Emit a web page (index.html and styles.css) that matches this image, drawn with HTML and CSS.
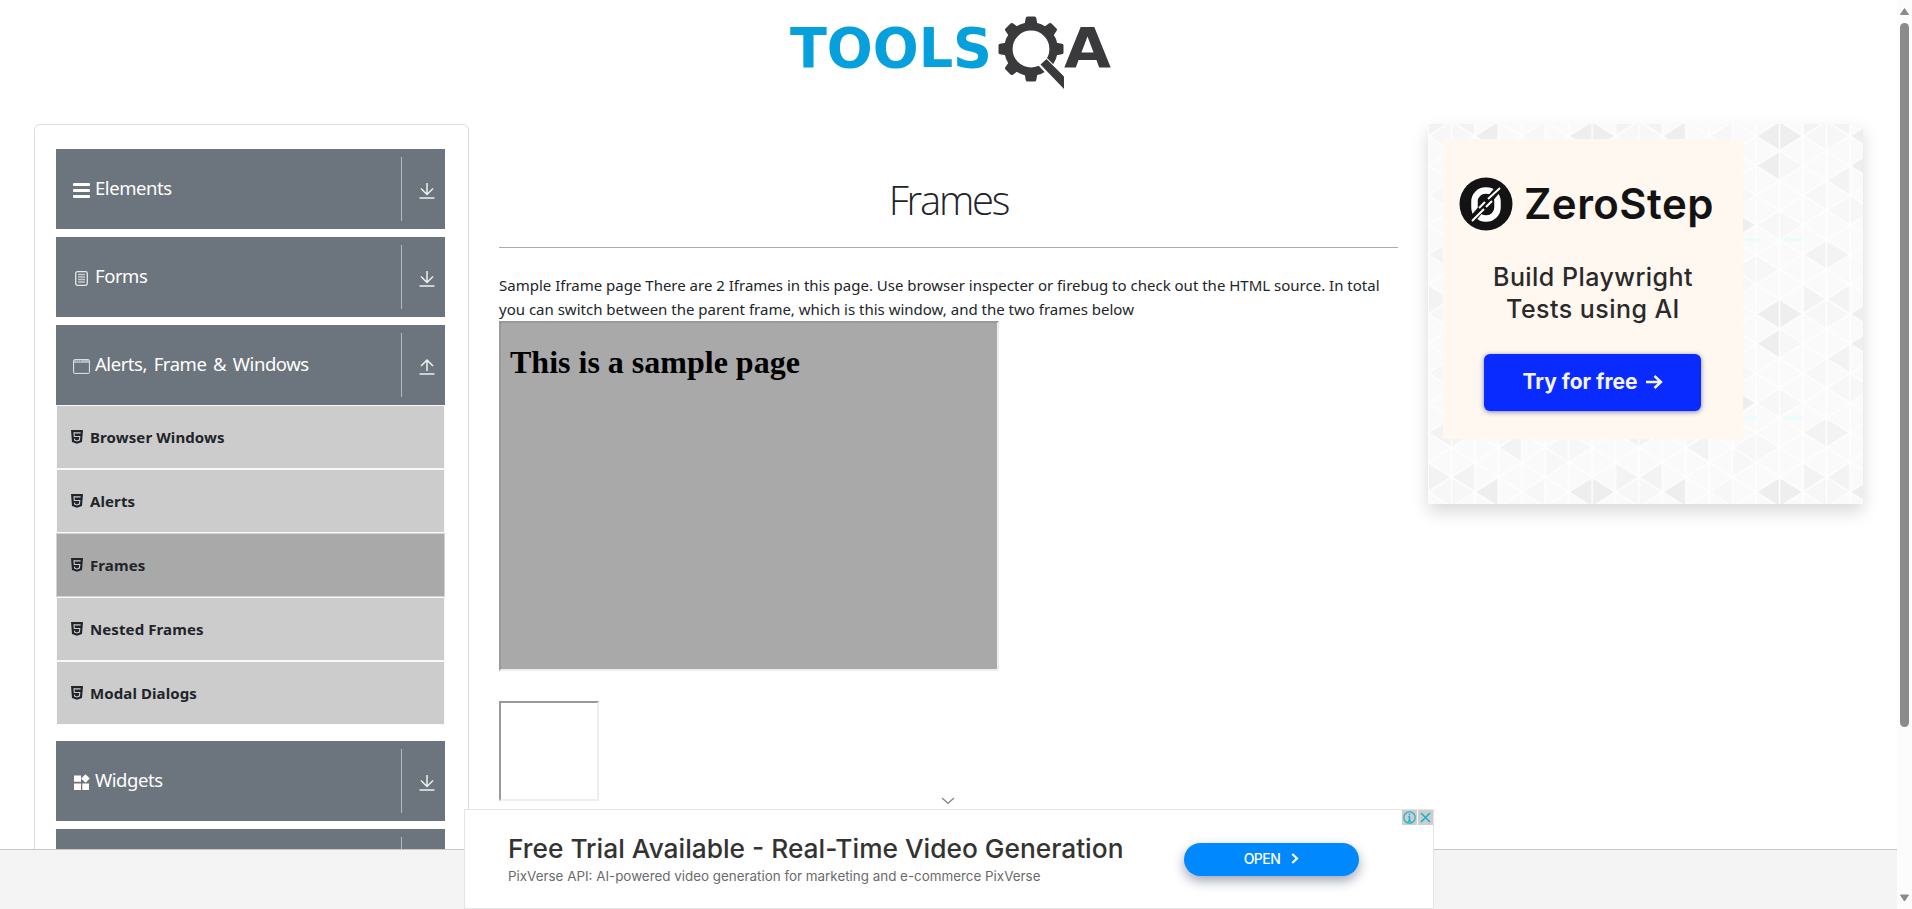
FILE: index.html
```html
<!DOCTYPE html>
<html lang="en">
<head>
<meta charset="utf-8">
<title>Frames</title>
<link rel="stylesheet" href="styles.css">
</head>
<body>
<svg width="0" height="0" class="defs">
  <symbol id="down" viewBox="0 0 16 18"><path d="M8 1v11M2 6.500l6 6 6-6" /><path d="M.5 16h15" /></symbol>
  <symbol id="up" viewBox="0 0 16 18"><path d="M8 13V2M2 8l6-6 6 6" /><path d="M.5 16h15" /></symbol>
  <symbol id="html5" viewBox="0 0 12 14"><path d="M0 0h12l-1 12-5 1.700L1 12z" fill="#212529"/><path d="M9.600 2.900H3l.3 3.600h5.500l-.4 3.600L6 11l-2.400-.8-.1-1.600" fill="none" stroke="#ccc" stroke-width="1.100"/></symbol>
</svg>
<div class="page">
  <header class="header">
    <svg class="logo" width="324" height="80" viewBox="0 0 324 80">
      <text class="logo-tools" x="0" y="57" textLength="202" lengthAdjust="spacingAndGlyphs">TOOLS</text>
      <g transform="translate(241 39)">
        <g fill="#3a3a3c">
          <g><path id="tooth" d="M-6.500-24l1.200-7Q-5-32.500-3.500-32.500h7Q5-32.500 5.300-31l1.200 7z"/><use href="#tooth" transform="rotate(45)"/><use href="#tooth" transform="rotate(90)"/><use href="#tooth" transform="rotate(180)"/></g>
          <use href="#tooth" transform="rotate(225)"/><use href="#tooth" transform="rotate(270)"/><use href="#tooth" transform="rotate(315)"/>
        </g>
        <circle r="22.600" fill="none" stroke="#3a3a3c" stroke-width="8.400"/>
        <path d="M7 16l8-8 22 22v18z" fill="#fff"/>
        <path d="M9.500 15.500l6-5.500L33 27.500V40z" fill="#3a3a3c"/>
      </g>
      <text class="logo-a" x="274" y="57" textLength="47" lengthAdjust="spacingAndGlyphs">A</text>
    </svg>
  </header>
  <main class="main">
    <aside class="side">
      <div class="group"><svg class="gi" viewBox="0 0 17 17"><path d="M1 2.500h15M1 8.500h15M1 14.500h15" stroke="#fff" stroke-width="2.800" stroke-linecap="round"/></svg><span class="gt">Elements</span><span class="tog"><svg><use href="#down"/></svg></span></div>
      <div class="group"><svg class="gi" viewBox="0 0 17 17" fill="none" stroke="#e6e8ea"><rect x="2.700" y="1.700" width="11.600" height="13.600" rx="1.800" stroke-width="1.300"/><path d="M5 4.500h7M5 7h7M5 9.500h7M5 12h7" stroke-width="1.400" stroke="#c4c8cc"/></svg><span class="gt">Forms</span><span class="tog"><svg><use href="#down"/></svg></span></div>
      <div class="group open"><svg class="gi" viewBox="0 0 17 17" fill="none" stroke="#e6e8ea"><rect x=".6" y="1.600" width="15.800" height="13.800" rx="1"/><path d="M1 3.500h15" stroke="#bfc4c8" stroke-width="2.500"/><path d="M3 3h1M5 3h1M7 3h1" stroke="#6c757d"/></svg><span class="gt">Alerts, Frame &amp; Windows</span><span class="tog"><svg><use href="#up"/></svg></span></div>
      <ul class="menu">
        <li><svg><use href="#html5"/></svg><span>Browser Windows</span></li>
        <li><svg><use href="#html5"/></svg><span>Alerts</span></li>
        <li class="active"><svg><use href="#html5"/></svg><span>Frames</span></li>
        <li><svg><use href="#html5"/></svg><span>Nested Frames</span></li>
        <li><svg><use href="#html5"/></svg><span>Modal Dialogs</span></li>
      </ul>
      <div class="group"><svg class="gi" viewBox="0 0 17 17" fill="#fff"><path d="M1 1.500h7v6.300H1zM1 9.400h7V16H1zM9.300 9.400H16V16H9.300zM12.500.2l4.300 4.300-4.300 4.300-4.300-4.300z"/></svg><span class="gt">Widgets</span><span class="tog"><svg><use href="#down"/></svg></span></div>
      <div class="group"><span class="gt"></span><span class="tog"></span></div>
    </aside>
    <section class="content">
      <h1 class="title"><span>Frames</span></h1>
      <p class="desc">Sample Iframe page There are 2 Iframes in this page. Use browser inspecter or firebug to check out the HTML source. In total<br>you can switch between the parent frame, which is this window, and the two frames below</p>
      <div class="frame big"><h2>This is a sample page</h2></div>
      <div class="frame small"></div>
    </section>
    <aside class="promo">
      <svg class="tri" width="435" height="380">
        <defs><pattern id="p" width="187.500" height="178" patternUnits="userSpaceOnUse" patternTransform="translate(0 -2.800)">
          <rect width="188" height="178" fill="#fafafa"/>
          <g transform="scale(23.4375 14.8333)">
            <path fill="#f7f7f7" d="M0 1L1 0V2zM2 3L3 2V4zM4 1L5 0V2zM0 5L1 4V6zM1 6L2 5V7zM3 8L4 7V9zM6 5L5 4V6zM4 7L5 6V8zM6 7L7 6V8zM0 9L1 8V10zM4 9L3 8V10zM5 10L6 9V11zM7 10L6 9V11zM2 1L1 0V2zM8 7L7 6V8zM6 11L5 10V12zM3 6L2 5V7zM5 4L4 3V5zM8 3L7 2V4z"/>
            <path fill="#f3f3f3" d="M1 4L2 3V5zM0 9L1 8V10zM2 9L1 8V10zM1 0L0-1V1zM1 12L0 11V13zM1 0L2-1V1zM1 12L2 11V13zM3 10L4 9V11z"/>
            <path fill="#eeeeee" d="M6 1L7 0V2zM8 1L7 0V2zM6 3L7 2V4zM2 1L3 0V2zM2 3L3 2V4zM6 7L5 6V8z"/>
            <path class="mesh" d="M0-7L8 1M0-5L8 3M0-3L8 5M0-1L8 7M0 1L8 9M0 3L8 11M0 5L8 13M0 7L8 15M0 9L8 17M0 11L8 19M0 1L8-7M0 3L8-5M0 5L8-3M0 7L8-1M0 9L8 1M0 11L8 3M0 13L8 5M0 15L8 7M0 17L8 9M0 19L8 11M0 0V12M1 0V12M2 0V12M3 0V12M4 0V12M5 0V12M6 0V12M7 0V12M8 0V12"/>
          </g>
          <path d="M130 118.500h12M167 118.500h20" stroke="#e0ffff" stroke-width="2"/>
        </pattern></defs>
        <rect width="435" height="380" fill="url(#p)"/>
      </svg>
      <div class="zero">
        <div class="brand">
          <svg width="54" height="54" viewBox="0 0 54 54"><circle cx="27" cy="27" r="26.500" fill="#131313"/><rect x="15.500" y="13.500" width="23" height="28" rx="11" fill="none" stroke="#fff" stroke-width="6.500"/><path d="M12 44L41 10" stroke="#131313" stroke-width="7"/><path d="M13 44l12-12M20 31l6-6M27 30l6-6M29 22l12-11" stroke="#fff" stroke-width="2"/></svg>
          <span class="bname">ZeroStep</span>
        </div>
        <div class="slogan"><span>Build Playwright</span><br><span>Tests using AI</span></div>
        <div class="try"><span>Try for free</span><svg width="18" height="16" viewBox="0 0 18 16"><path d="M1 8h15M9.500 2l6.500 6-6.500 6" fill="none" stroke="#f4f4ff" stroke-width="2.400"/></svg></div>
      </div>
    </aside>
  </main>
  <footer class="footer"></footer>
  <div class="anchor">
    <svg class="chev" width="14" height="8" viewBox="0 0 14 8"><path d="M1 1l6 5.300L13 1" fill="none" stroke="#888" stroke-width="1.300"/></svg>
    <div class="ad">
      <div class="adtext"><div class="adtitle"><span>Free Trial Available - Real-Time Video Generation</span></div><div class="adsub"><span>PixVerse API: AI-powered video generation for marketing and e-commerce PixVerse</span></div></div>
      <div class="openbtn"><span>OPEN</span><svg width="8" height="11" viewBox="0 0 8 11"><path d="M1.300 1l4.700 4.500L1.300 10" fill="none" stroke="#fff" stroke-width="2.200"/></svg></div>
      <div class="choices">
        <svg width="15" height="15"><circle cx="7.500" cy="7.500" r="5.700" fill="none" stroke="#16b3d1" stroke-width="1.200"/><path d="M7.500 3.800v1.500M7.500 6.300v5M6.300 6.800h1.200M6 11h3" stroke="#16b3d1" stroke-width="1.400"/></svg>
        <svg width="15" height="15"><path d="M3 3l9 9M12 3l-9 9" stroke="#16b3d1" stroke-width="1.600"/></svg>
      </div>
    </div>
  </div>
</div>
<div class="scroll">
  <svg width="9" height="8"><path d="M.5 6.500L4.500.5l4 6z" fill="#8b8b8b" stroke="#8b8b8b" stroke-linejoin="round"/></svg>
  <div class="thumb"></div>
  <svg class="dn" width="9" height="8"><path d="M.5 1l4 6 4-6z" fill="#8b8b8b" stroke="#8b8b8b" stroke-linejoin="round"/></svg>
</div>
</body>
</html>
```
FILE: styles.css
```css
* { box-sizing: border-box; }
body { margin: 0; height: 909px; overflow: hidden; display: flex; background: #fff; color: #212529; font: 16px/24px "Noto Sans", "Open Sans", sans-serif; }
.defs { position: absolute; }
svg { display: block; flex: none; }
.page { position: relative; width: 1897px; height: 909px; overflow: hidden; }
.header { height: 124px; padding: 10px 0 0 790px; }
.logo-tools { font: 700 56px "DejaVu Sans", sans-serif; fill: #06a0dc; }
.logo-a { font: 700 56px "DejaVu Sans", sans-serif; fill: #3a3a3c; }
.main { display: flex; align-items: flex-start; padding-left: 34px; }
.side { width: 435px; height: 900px; border: 1px solid #dcdcdc; border-radius: 6px; padding: 24px 23px 0 21px; flex: none; }
.group { width: 389px; height: 80px; background: #6c757d; margin-bottom: 8px; display: flex; align-items: center; padding-left: 17px; color: #fff; }
.group.open { margin-bottom: 0; }
.gi { width: 17px; height: 17px; margin-top: 3px; }
.gt { flex: 1; margin: -2px 0 0 5px; font-size: 18.500px; letter-spacing: -.45px; word-spacing: 2.300px; line-height: 28px; white-space: nowrap; }
.tog { width: 44px; height: 64px; border-left: 1px solid #b5babe; display: flex; align-items: center; padding: 4px 0 0 17px; }
.tog svg { width: 16px; height: 18px; fill: none; stroke: #eef0f1; stroke-width: 1.5; }
.menu { list-style: none; margin: 0 0 16px; padding: 0; }
.menu li { height: 64px; border: 1px solid #f8f9fa; background: #ccc; display: flex; align-items: center; padding-left: 14px; font-weight: 700; font-size: 15px; letter-spacing: .1px; }
.menu li.active { background: #a9a9a9; border-color: #d0d3da; }
.menu svg { width: 12px; height: 14px; margin-right: 7px; }
.content { margin-left: 30px; width: 899px; flex: none; }
.title { margin: 48px 0 0; height: 76px; border-bottom: 1px solid #a9abad; font: 300 40px/56px "Open Sans", sans-serif; text-align: center; }
.title span { letter-spacing: -2.200px; }
.desc { margin: 25px 0 0; height: 48px; white-space: nowrap; font-size: 15px; }
.frame { border: 2px inset #eee; }
.big { width: 500px; height: 350px; background: #a9a9a9; padding: 1px 9px; }
.big h2 { font: 700 32px/37px "Liberation Serif", serif; color: #000; margin: 20px 0 0; }
.small { width: 100px; height: 100px; margin-top: 30px; }
.promo { margin-left: 30px; width: 435px; height: 380px; flex: none; padding: 15px; position: relative; box-shadow: 0 8px 16px rgba(0,0,0,.15); }
.tri { position: absolute; left: 0; top: 0; }
.mesh { fill: none; stroke: #fff; stroke-width: 1.4px; vector-effect: non-scaling-stroke; }
.zero { position: relative; width: 300px; height: 300px; background: #fef8f1; padding: 38px 0 0 16px; font-family: "Inter", sans-serif; }
.brand { display: flex; align-items: center; height: 54px; gap: 11px; color: #131313; }
.bname { font-weight: 600; font-size: 42px; letter-spacing: .45px; line-height: 54px; }
.slogan { margin: 31px 16px 0 0; text-align: center; font-weight: 500; font-size: 25px; letter-spacing: .45px; line-height: 31.500px; height: 63px; color: #2b2929; }
.try { margin: 29px 0 0 25px; width: 217px; height: 57px; background: #0a2bff; border-radius: 6px; display: flex; align-items: center; justify-content: center; gap: 7px; color: #f4f4ff; font-weight: 700; font-size: 21px; box-shadow: 0 1px 5px rgba(0,0,80,.5); padding-bottom: 2px; }
.footer { position: absolute; left: 0; right: 0; bottom: 0; height: 60px; background: #f4f4f4; border-top: 1px solid #c8c8c8; }
.anchor { position: absolute; left: 464px; top: 797px; width: 970px; }
.chev { margin: 0 0 4px 477px; }
.ad { position: relative; height: 100px; background: #fff; border: 1px solid #e4e4e4; display: flex; padding-left: 43px; font-family: "Inter", sans-serif; }
.adtext { width: 676px; padding-top: 22px; }
.adtitle { font-weight: 500; font-size: 26.300px; line-height: 34px; color: #333; white-space: nowrap; }
.adsub { font-size: 13.400px; line-height: 20px; color: #6b6b6b; white-space: nowrap; }
.openbtn { margin-top: 33px; width: 175px; height: 33px; border-radius: 17px; background: #0088ff; display: flex; align-items: center; justify-content: center; gap: 11px; color: #fff; font-size: 14px; font-weight: 500; box-shadow: 0 5px 12px rgba(20,30,70,.4); letter-spacing: -.5px; padding-bottom: 2px; }
.choices { position: absolute; top: 0; right: 0; display: flex; gap: 1px; }
.choices svg { background: #cdcdcd; }
.scroll { width: 15px; height: 909px; background: #fcfcfc; padding: 8px 3px 0; flex: none; }
.thumb { width: 9px; height: 704px; margin-top: 7px; border-radius: 5px; background: #8b8b8b; }
.dn { margin-top: 167px; }
```
